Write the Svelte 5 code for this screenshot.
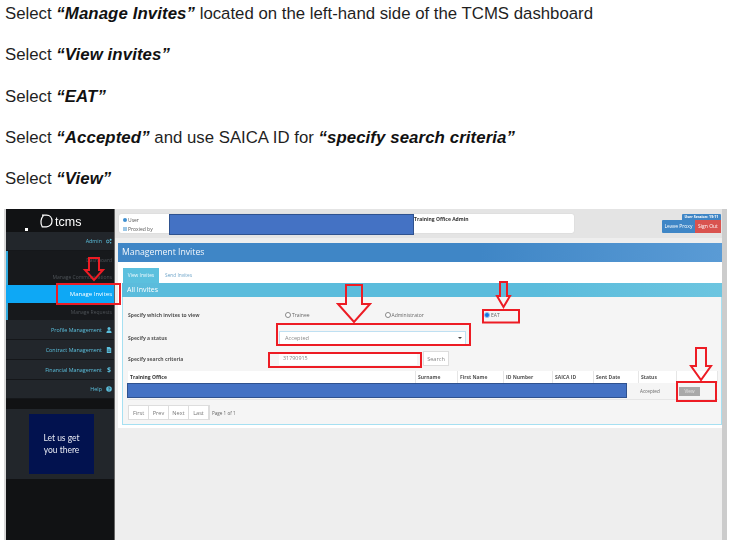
<script>
  const steps = [
    { pre: 'Select ', b: '“Manage Invites”', post: ' located on the left-hand side of the TCMS dashboard' },
    { pre: 'Select ', b: '“View invites”' },
    { pre: 'Select ', b: '“EAT”' },
    { pre: 'Select ', b: '“Accepted”', post: ' and use SAICA ID for ', b2: '“specify search criteria”' },
    { pre: 'Select ', b: '“View”' }
  ];
  const nav = [
    { label: 'Admin', icon: 'cogs', cls: 'top h19' },
    { label: 'Dashboard', cls: 'sub' },
    { label: 'Manage Communications', cls: 'sub' },
    { label: 'Manage Invites', cls: 'active' },
    { label: 'Manage Requests', cls: 'sub' },
    { label: 'Profile Management', icon: 'user', cls: 'top' },
    { label: 'Contract Management', icon: 'file', cls: 'top' },
    { label: 'Financial Management', icon: 'dollar', cls: 'top' },
    { label: 'Help', icon: 'help', cls: 'top h19' }
  ];
  const cols = ['Surname', 'First Name', 'ID Number', 'SAICA ID', 'Sent Date', 'Status', ''];
  const pages = ['First', 'Prev', 'Next', 'Last'];
</script>

<div class="page">
  <div class="steps">
    {#each steps as s}
      <p>{s.pre}<b>{s.b}</b>{s.post ?? ''}{#if s.b2}<b>{s.b2}</b>{/if}</p>
    {/each}
  </div>

  <div class="shot">
    <div class="inner">
      <aside>
        <div class="logo">
          <span class="dot"></span>
          <svg class="mark" viewBox="0 0 13 14" width="13" height="14">
            <path d="M2 1.2H6.5C10 1.2 12 3.8 12 7C12 10.400 9.600 12.800 6.500 12.800H2.200C1 10.600 0.800 9 1 7C1.200 5 2 3 3.400 1.600" fill="none" stroke="#fff" stroke-width="1.2"/>
          </svg>
          <span class="brand">tcms</span>
        </div>
        {#each nav as n}
          <div class="item {n.cls}">
            <span>{n.label}</span>
            {#if n.icon === 'cogs'}
              <svg viewBox="0 0 7 6" width="6" height="6"><circle cx="2" cy="3.500" r="1.600" fill="none" stroke="#5bc0de" stroke-width="1"/><circle cx="5.400" cy="1.600" r="1.100" fill="#5bc0de"/><circle cx="5.400" cy="5" r="0.900" fill="#5bc0de"/></svg>
            {:else if n.icon === 'user'}
              <svg viewBox="0 0 6 6" width="6" height="6"><circle cx="3" cy="1.600" r="1.500" fill="#5bc0de"/><path d="M0.400 6C0.400 4 1.400 3.200 3 3.200S5.600 4 5.600 6Z" fill="#5bc0de"/></svg>
            {:else if n.icon === 'file'}
              <svg viewBox="0 0 6 6" width="6" height="6"><path d="M0.800 0H3.800L5.200 1.500V6H0.800Z" fill="#5bc0de"/><path d="M1.600 3H4.400M1.600 4.400H4.400" stroke="#22262b" stroke-width="0.5"/></svg>
            {:else if n.icon === 'dollar'}
              <span class="glyph">$</span>
            {:else if n.icon === 'help'}
              <svg viewBox="0 0 6 6" width="6" height="6"><circle cx="3" cy="3" r="2.800" fill="#5bc0de"/><path d="M2.200 2.300C2.300 1.500 3.800 1.500 3.800 2.400C3.800 3 3 3 3 3.700M3 4.300V4.900" stroke="#22262b" stroke-width="0.7" fill="none"/></svg>
            {/if}
          </div>
        {/each}
        <div class="gap"></div>
        <div class="promo"><div class="banner">Let us get<br />you there</div></div>
        <div class="rest"></div>
      </aside>

      <main>
        <div class="topbar">
          <div class="userbox">
            <div class="who">
              <div><i class="mini"></i>User</div>
              <div><i class="mini alt"></i>Proxied by</div>
            </div>
            <div class="redact name"></div>
            <div class="role">Training Office Admin</div>
          </div>
          <div class="session">
            <div class="timer">User Session: 19:11</div>
            <div class="btns"><span class="leave">Leave Proxy</span><span class="out">Sign Out</span></div>
          </div>
        </div>

        <div class="card">
          <h1>Management Invites</h1>
          <div class="tabs"><span class="tab on">View Invites</span><span class="tab">Send Invites</span></div>
          <div class="box">
            <h2>All Invites</h2>
            <div class="body">
              <div class="row r1">
                <span class="lab">Specify which invites to view</span>
                <div class="radios">
                  <span class="radio"><i></i>Trainee</span>
                  <span class="radio"><i></i>Administrator</span>
                  <span class="radio"><i class="sel"></i>EAT</span>
                </div>
              </div>
              <div class="row r2">
                <span class="lab">Specify a status</span>
                <div class="select"><span>Accepted</span><b></b></div>
              </div>
              <div class="row r3">
                <span class="lab">Specify search criteria</span>
                <div class="input">31790915</div>
                <div class="search">Search</div>
              </div>

              <div class="table">
                <div class="thead">
                  <span class="c0">Training Office</span>
                  {#each cols as c, i}<span class="c{i + 1}">{c}</span>{/each}
                </div>
                <div class="tbody">
                  <div class="redact rowred"></div>
                  <span class="acc">Accepted</span>
                  <span class="cellview"><span class="view">View</span></span>
                </div>
              </div>

              <div class="pager">
                <div class="pages">{#each pages as p}<span>{p}</span>{/each}</div>
                <span class="count">Page 1 of 1</span>
              </div>
            </div>
          </div>
        </div>
      </main>
      <div class="scroll"></div>
    </div>

    <svg class="notes" width="731" height="552" viewBox="0 0 731 552">
      <g fill="none" stroke="#ed1c24" stroke-width="2">
        <rect x="57" y="284" width="63" height="20" />
        <rect x="277" y="324" width="193" height="21" />
        <rect x="269" y="353" width="152" height="14" />
        <rect x="483" y="310" width="36" height="12.500" />
        <rect x="677" y="382" width="39" height="19" />
        <path d="M89 258H99V270H103L94 280L85 270H89Z" />
        <path d="M346 285H362V304H370L354 322L338 304H346Z" />
        <path d="M500 282H507V296H510L503.500 307L497 296H500Z" />
        <path d="M696 348H706V366H711L701 380L691 366H696Z" />
      </g>
    </svg>
  </div>
</div>

<style>
  :global(body) { margin: 0; background: #fff; }
  .page { width: 731px; height: 552px; overflow: hidden; position: relative; font-family: "Liberation Sans", Arial, sans-serif; }
  .steps { padding: 4px 0 0 5px; height: 206px; box-sizing: border-box; }
  .steps p { margin: 0 0 21.25px; font-size: 16.8px; line-height: 20px; color: #1f1f1f; white-space: nowrap; }
  .steps b { font-style: italic; font-weight: 700; color: #111; letter-spacing: 0.1px; }

  .shot { margin: 3px 4px 0 4px; height: 332px; position: relative; }
  .inner { display: flex; height: 331px; background: #eee; border-left: 2px solid #d8d8d8; font-family: "Open Sans", sans-serif; filter: blur(0.4px); }

  aside { width: 109px; flex: none; display: flex; flex-direction: column; background: #111214; border-right: 1px solid #666; box-sizing: border-box; }
  .logo { height: 23px; position: relative; display: flex; align-items: center; padding-left: 34px; box-sizing: border-box; gap: 2px; }
  .dot { position: absolute; left: 19px; top: 19px; width: 3px; height: 3px; background: #fff; }
  .mark { flex: none; }
  .brand { color: #fff; font: 12.5px/1 "Liberation Sans", sans-serif; margin-top: 3px; }
  .item { display: flex; justify-content: flex-end; align-items: center; gap: 4px; box-sizing: border-box; padding-right: 2px; font-size: 5.4px; white-space: nowrap; }
  .item.top { height: 20px; background: #22262b; border-bottom: 1px solid #15171a; color: #5bc0de; }
  .item.h19 { height: 19px; }
  .item.sub { height: 17px; background: #17191c; border-left: 2px solid #2fa8dc; color: #4d5257; font-size: 5px; }
  .item.active { height: 18px; background: #0ea8f5; color: #fff; font-size: 6px; }
  .glyph { width: 6px; text-align: center; font-size: 7px; font-weight: 700; }
  .gap { height: 10px; background: #111214; }
  .promo { height: 70px; background: #22262b; padding: 5px 0 0 23px; box-sizing: border-box; }
  .banner { width: 65px; height: 60px; background: #02124f; color: #e8eaf2; font: 8.5px/12px "Lato", sans-serif; text-align: center; display: flex; align-items: center; justify-content: center; }
  .rest { flex: 1; background: #111214; }

  main { flex: 1; min-width: 0; }
  .topbar { height: 29px; background: #e4e4e4; display: flex; justify-content: space-between; padding: 5px 1px 0 4px; box-sizing: border-box; margin-bottom: 5px; }
  .userbox { width: 455px; height: 19px; background: #fff; display: flex; border-radius: 2px; font-size: 5px; color: #444; box-shadow: 0 0 1px #bbb; }
  .who { width: 50px; flex: none; padding: 2px 0 0 4px; box-sizing: border-box; line-height: 9px; color: #555; }
  .mini { display: inline-block; width: 4px; height: 4px; background: #3f8fd0; border-radius: 2px; margin-right: 1px; }
  .mini.alt { background: #9cc7e6; border-radius: 0; }
  .redact { background: #4472c4; border: 1px solid #2f528f; box-sizing: border-box; }
  .name { width: 245px; height: 21px; flex: none; border-width: 1.5px; }
  .role { font-weight: 700; font-size: 5px; padding-top: 2px; color: #333; }
  .session { display: flex; flex-direction: column; align-items: flex-end; }
  .timer { background: #3f86c6; color: #fff; font-size: 3.6px; font-weight: 700; height: 6px; line-height: 6px; padding: 0 2px; border-radius: 1px 1px 0 0; width: 39px; box-sizing: border-box; text-align: center; }
  .btns { display: flex; height: 13px; line-height: 13px; font-size: 5px; color: #fff; text-align: center; }
  .leave { width: 33px; background: #3f86c6; border-radius: 1px 0 0 1px; }
  .out { width: 26px; background: #d9534f; }

  .card { background: #fff; padding: 0 0 3px; margin-left: 3px; }
  .card h1 { margin: 0; height: 19px; line-height: 19px; padding-left: 4px; font-size: 8.7px; font-weight: 400; color: #f2f6fb; background: linear-gradient(90deg, #3f86c6 60%, #5a9bd5); }
  .tabs { height: 21px; padding: 6px 0 0 5px; box-sizing: border-box; display: flex; gap: 6px; font-size: 4.8px; }
  .tab { line-height: 15px; color: #6fa5c9; }
  .tab.on { width: 36px; text-align: center; background: #5bc0de; color: #f2fbfe; }
  .box { margin-left: 4px; }
  .box h2 { margin: 0; height: 14px; line-height: 14px; padding-left: 5px; font-size: 7px; font-weight: 400; color: #fff; background: linear-gradient(90deg, #5bbcdc 70%, #6cc5e0); }
  .body { background: #f5f5f5; border: 1px solid #a6e0f2; border-top: 0; height: 128px; box-sizing: border-box; padding-left: 5px; position: relative; display: flex; flex-direction: column; }
  .row { display: flex; align-items: center; font-size: 5px; }
  .lab { width: 151px; flex: none; font-weight: 700; color: #555; }
  .r1 { height: 14px; margin-top: 11px; }
  .radios { display: flex; color: #666; }
  .radio { width: 99.5px; display: flex; align-items: center; gap: 1px; padding-left: 6px; box-sizing: border-box; }
  .radio i { width: 4px; height: 4px; border: 0.7px solid #888; border-radius: 50%; background: #fff; flex: none; }
  .radio i.sel { background: #1274e0; border-color: #9cc4ef; }
  .r2 { height: 14px; margin-top: 9px; }
  .select { width: 187px; height: 14px; background: #fff; border: 1px solid #bfe0f2; box-sizing: border-box; display: flex; align-items: center; justify-content: space-between; padding: 0 3px 0 5px; color: #888; font-size: 5.6px; }
  .select b { width: 0; height: 0; border: 2px solid transparent; border-top: 2.5px solid #444; border-bottom: 0; }
  .r3 { height: 15px; margin-top: 6px; }
  .input { width: 138px; height: 13px; line-height: 13px; background: #fff; padding-left: 4px; box-sizing: border-box; color: #888; font-size: 5.4px; }
  .search { margin-left: 6px; width: 26px; height: 15px; line-height: 15px; text-align: center; background: #fff; border: 0.5px solid #ddd; box-sizing: border-box; color: #888; font-size: 5.6px; }

  .table { margin-top: 5px; width: 590px; font-size: 5px; }
  .thead { display: flex; height: 12px; line-height: 12px; background: #fff; font-weight: 700; color: #555; }
  .thead span { padding-left: 2px; box-sizing: border-box; flex: none; border-right: 0.5px solid #e6e6e6; }
  .c0 { width: 288px; color: #333; }
  .c1 { width: 42px; }
  .c2 { width: 46px; }
  .c3 { width: 49px; }
  .c4 { width: 41px; }
  .c5 { width: 45px; }
  .c6 { width: 38px; }
  .c7 { width: 41px; }
  .tbody { display: flex; align-items: center; height: 17px; border-bottom: 0.5px solid #e6e6e6; box-sizing: border-box; color: #666; }
  .rowred { width: 500px; height: 15px; flex: none; align-self: flex-start; border-width: 1.5px; margin-left: -1px; }
  .acc { margin-left: 13px; font-size: 4.6px; width: 36px; flex: none; }
  .cellview { margin-left: 3px; }
  .view { display: block; width: 21px; height: 9px; line-height: 9px; text-align: center; background: #a9a9a9; color: #e4e4e4; font-size: 4.6px; }

  .pager { display: flex; align-items: center; margin-top: 5px; gap: 2px; font-size: 4.6px; color: #666; }
  .pages { display: flex; height: 15px; background: #fff; border: 0.5px solid #ddd; box-sizing: border-box; font-size: 5.6px; line-height: 14px; color: #777; }
  .pages span { width: 20px; text-align: center; border-right: 0.5px solid #ddd; box-sizing: border-box; }
  .scroll { width: 5px; flex: none; background: #ccc; }

  .notes { position: absolute; left: -4px; top: -209px; pointer-events: none; }
</style>
